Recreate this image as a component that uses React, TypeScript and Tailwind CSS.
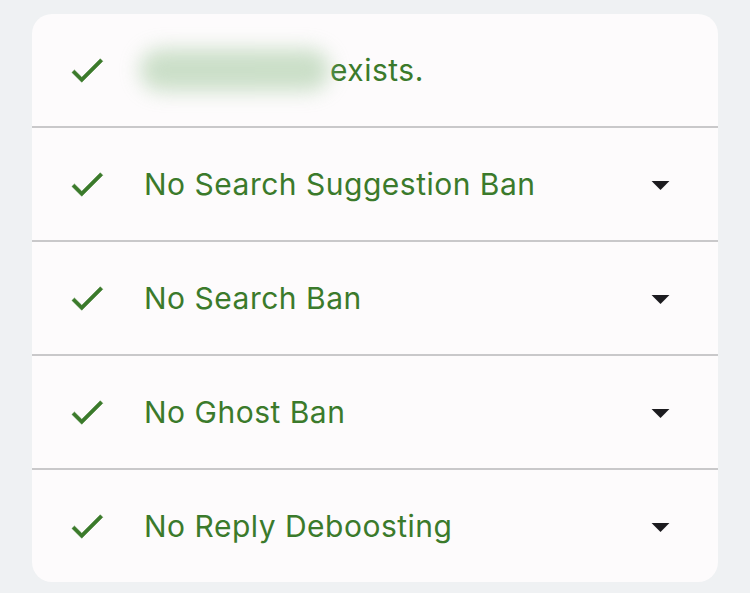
import React from "react";

const Check = () => (
  <svg viewBox="0 0 24 24" className="w-[42px] h-[42px] shrink-0" fill="#3b7a2b">
    <path d="M9 16.17L4.83 12l-1.42 1.41L9 19 21 7l-1.41-1.41z" stroke="#3b7a2b" strokeWidth="0.3" />
  </svg>
);

const Drop = () => (
  <svg viewBox="0 0 24 24" className="w-[43px] h-[43px] shrink-0" fill="#1c1b1f">
    <path d="M7 10l5 5 5-5z" />
  </svg>
);

const rows = [
  "No Search Suggestion Ban",
  "No Search Ban",
  "No Ghost Ban",
  "No Reply Deboosting",
];

export default function App() {
  return (
    <div
      className="w-[750px] h-[593px] bg-[#eff1f3] pt-[14px] pl-[32px]"
      style={{ fontFamily: "Inter, Roboto, sans-serif" }}
    >
      <div className="w-[686px] bg-[#fdfbfc] rounded-[20px] overflow-hidden">
        <div className="h-[112px] flex items-center pl-[34px]">
          <Check />
          <div className="ml-[32px] flex items-center text-[30px] tracking-[0.5px] text-[#3b7a2b]">
            <div className="w-[190px] h-[42px] rounded-full bg-[#a9cca5] blur-[10px] opacity-60" />
            <span className="ml-0">exists.</span>
          </div>
        </div>
        {rows.map((r) => (
          <div
            key={r}
            className="h-[114px] border-t-2 border-[#c9c8ca] flex items-center pl-[34px] pr-[36px]"
          >
            <Check />
            <div className="ml-[36px] flex-1 text-[30px] tracking-[0.5px] text-[#3b7a2b]">{r}</div>
            <Drop />
          </div>
        ))}
      </div>
    </div>
  );
}
